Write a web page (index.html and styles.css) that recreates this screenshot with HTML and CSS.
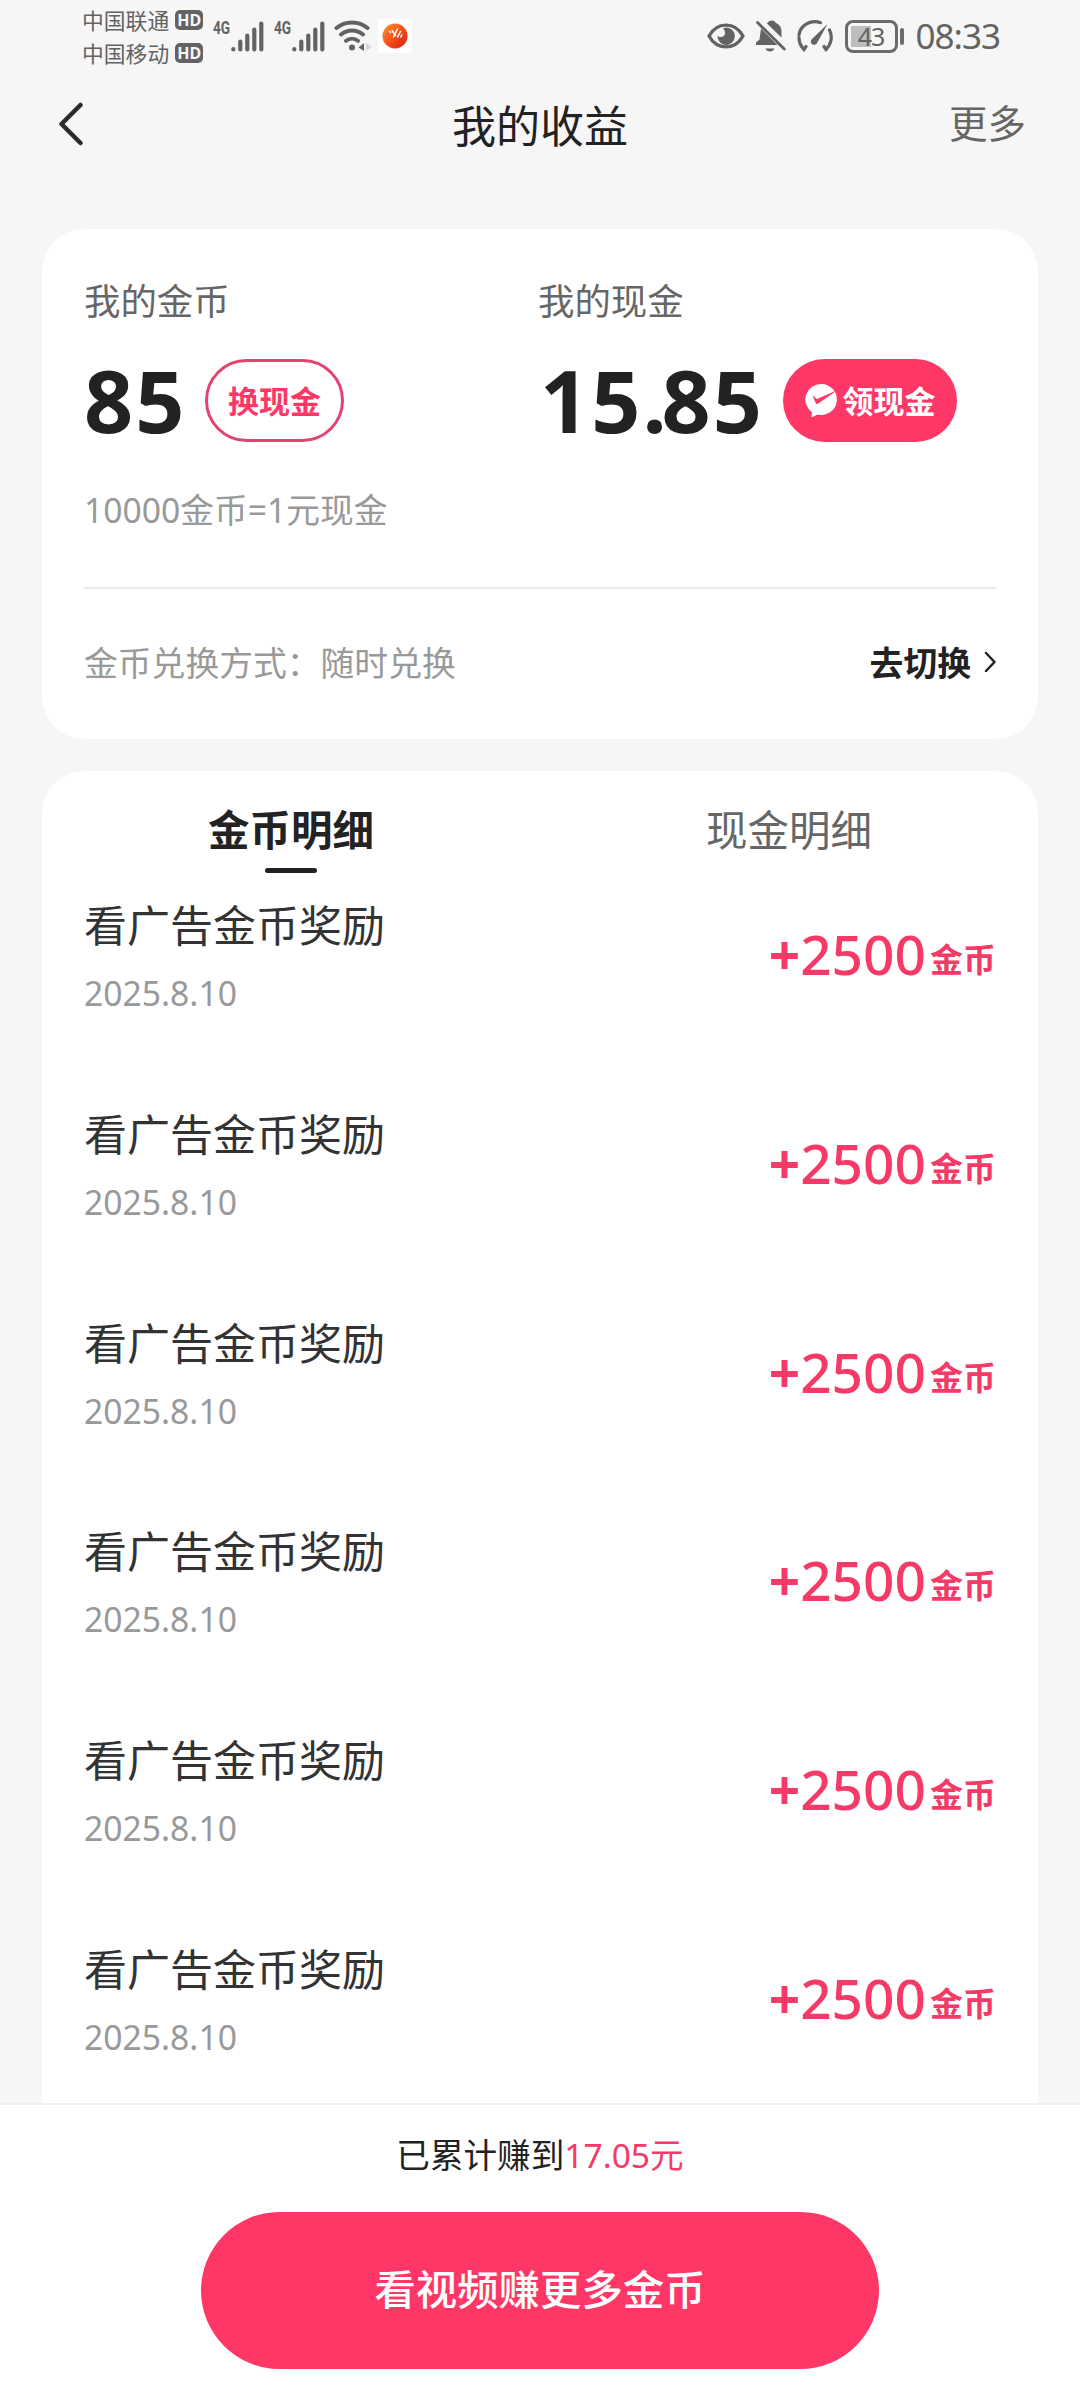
FILE: index.html
```html
<!DOCTYPE html>
<html lang="zh-CN">
<head>
  <meta charset="UTF-8">
  <meta name="viewport" content="width=device-width, initial-scale=1.0">
  <title>我的收益</title>
  <link rel="stylesheet" href="styles.css">
</head>
<body>
  <!-- 状态栏 -->
  <div class="status">
    <div class="carriers">
      <div class="carrier">中国联通<span class="hd">HD</span></div>
      <div class="carrier">中国移动<span class="hd">HD</span></div>
    </div>
    <div class="signal">
      <span class="net">4G</span>
      <svg width="33" height="31" viewBox="0 0 33 31" stroke="#636363" stroke-width="4.2" stroke-linecap="round"><path d="M2.3 28v.5M9.3 20.500v8M16.300 14.500v14M23.300 8.500v20M30.300 2.500v26"/></svg>
    </div>
    <div class="signal">
      <span class="net">4G</span>
      <svg width="33" height="31" viewBox="0 0 33 31" stroke="#636363" stroke-width="4.2" stroke-linecap="round"><path d="M2.3 28v.5M9.3 20.500v8M16.300 14.500v14M23.300 8.500v20M30.300 2.500v26"/></svg>
    </div>
    <svg class="wifi" width="38" height="32" viewBox="0 0 38 32" fill="none" stroke="#636363" stroke-width="4" stroke-linecap="round">
      <path d="M2.500 8C11 .5 25 .5 33.500 8"/>
      <path d="M7 14.500C13.500 9 22.500 9 29 14.500"/>
      <path d="M12 20.800C15.500 18 20.500 18 24 20.800"/>
      <circle cx="18" cy="27.500" r="3" fill="#636363" stroke="none"/>
      <path d="M30 23v8l-5.500-3.500z" fill="#636363" stroke="none"/>
      <path d="M32 23v8l5.500-4z" fill="#d4d4d4" stroke="none"/>
    </svg>
    <div class="app">
      <svg width="34" height="34" viewBox="0 0 34 34">
        <defs><linearGradient id="g" x1="0" y1="0" x2="1" y2="1"><stop offset="0" stop-color="#ff9a2e"/><stop offset=".5" stop-color="#f4501c"/><stop offset="1" stop-color="#d51a16"/></linearGradient></defs>
        <circle cx="17" cy="17" r="12.500" fill="url(#g)"/>
        <path d="M11.500 12.500l1 1M14 11.500l3.500 5M15.500 18l4-8M19.500 18l3-5.500M22.800 18l1-2" stroke="#fff" stroke-width="1.500" stroke-linecap="round"/>
      </svg>
    </div>
    <div class="status-right">
      <svg class="eye" width="38" height="26" viewBox="0 0 38 26">
        <path d="M2 13C10 -1.500 28 -1.500 36 13C28 27.500 10 27.500 2 13z" fill="none" stroke="#636363" stroke-width="3.400" stroke-linejoin="round"/>
        <path d="M19 4.500a8.700 8.700 0 1 1-8.500 8c2.500 3 7.500 1.500 7.500-2.500 0-2-1-3.500-2-4.500z" fill="#636363"/>
      </svg>
      <svg class="bell" width="30" height="32" viewBox="0 0 30 32" fill="#636363">
        <path d="M11 3.500C13 -.3 18 -.5 20 3c4 1.500 5.500 5 5.500 9v5.500z"/>
        <path d="M5 8.500L21.500 25H0v-2.500l3.500-3z"/>
        <path d="M9.500 28.500h9c-1.500 4-7.500 4-9 0z"/>
        <path d="M1.500 2.500L28.300 29" stroke="#636363" stroke-width="2.800" stroke-linecap="round"/>
      </svg>
      <svg class="gauge" width="36" height="32" viewBox="0 0 36 32" fill="none" stroke="#636363" stroke-width="3.200" stroke-linecap="round">
        <path d="M2 15A16 15 0 0 1 23.500 2.700"/>
        <path d="M2 17.500c0 4.500 1.500 8.500 5 12l2-3"/>
        <path d="M32.500 10c3.500 7 1.500 14.500-3.500 19.500l-2-3"/>
        <path d="M30.500 4L15 19a3.300 3.300 0 1 0 5.200 3.700z" fill="#636363" stroke="none"/>
      </svg>
      <div class="battery"><span>43</span></div>
      <span class="nub"></span>
      <span class="clock">08:33</span>
    </div>
  </div>

  <!-- 标题栏 -->
  <div class="nav">
    <svg class="back" width="26" height="44" viewBox="0 0 26 44" fill="none" stroke="#2b2b2b" stroke-width="4.500" stroke-linecap="round" stroke-linejoin="round"><path d="M23.500 3L4.500 22l19 19"/></svg>
    <h1>我的收益</h1>
    <span class="more">更多</span>
  </div>

  <!-- 余额 -->
  <div class="card balance">
    <div class="columns">
      <div class="column">
        <div class="label">我的金币</div>
        <div class="figure"><span class="number">85</span><button class="pill outline">换现金</button></div>
      </div>
      <div class="column">
        <div class="label">我的现金</div>
        <div class="figure">
          <span class="number cash">15<i>.</i>85</span>
          <button class="pill solid">
            <svg width="33" height="34" viewBox="0 0 33 34">
              <path d="M16.500 1a15.500 15.500 0 1 1-4 30.500L6.500 34.500l.5-5.300A15.500 15.500 0 0 1 16.500 1z" fill="#fff"/>
              <path d="M7.500 12.500l4.500 3.500L32.500 7 13 20.800q-1.500.8-2.300-.8z" fill="#ff3766"/>
            </svg>领现金</button>
        </div>
      </div>
    </div>
    <div class="rate">10000金币=1元现金</div>
    <div class="exchange">
      <span>金币兑换方式：随时兑换</span>
      <span class="switch">去切换<svg width="14" height="22" viewBox="0 0 14 22" fill="none" stroke="#222" stroke-width="2.500" stroke-linecap="round" stroke-linejoin="round"><path d="M3 3l8.500 9L3 21"/></svg></span>
    </div>
  </div>

  <!-- 明细 -->
  <div class="card details">
    <div class="tabs">
      <div class="tab active">金币明细</div>
      <div class="tab">现金明细</div>
    </div>
    <div class="list">
      <div class="item">
        <div><div class="name">看广告金币奖励</div><div class="date">2025.8.10</div></div>
        <div class="amount"><b>+</b>2500<small>金币</small></div>
      </div>
      <div class="item">
        <div><div class="name">看广告金币奖励</div><div class="date">2025.8.10</div></div>
        <div class="amount"><b>+</b>2500<small>金币</small></div>
      </div>
      <div class="item">
        <div><div class="name">看广告金币奖励</div><div class="date">2025.8.10</div></div>
        <div class="amount"><b>+</b>2500<small>金币</small></div>
      </div>
      <div class="item">
        <div><div class="name">看广告金币奖励</div><div class="date">2025.8.10</div></div>
        <div class="amount"><b>+</b>2500<small>金币</small></div>
      </div>
      <div class="item">
        <div><div class="name">看广告金币奖励</div><div class="date">2025.8.10</div></div>
        <div class="amount"><b>+</b>2500<small>金币</small></div>
      </div>
      <div class="item">
        <div><div class="name">看广告金币奖励</div><div class="date">2025.8.10</div></div>
        <div class="amount"><b>+</b>2500<small>金币</small></div>
      </div>
    </div>
  </div>

  <!-- 底部按钮 -->
  <div class="footer">
    <div class="total">已累计赚到<span>17.05元</span></div>
    <button class="watch">看视频赚更多金币</button>
  </div>
</body>
</html>
```
FILE: styles.css
```css
* {
  box-sizing: border-box;
}

body {
  margin: 0;
  height: 2400px;
  display: flex;
  flex-direction: column;
  overflow: hidden;
  background-color: #f6f6f6;
  color: #222;
  font-family: 'Noto Sans', 'Noto Sans CJK SC', sans-serif;
}

svg {
  display: block;
  flex: none;
}

button {
  border: none;
  padding: 0;
  font-family: inherit;
  white-space: nowrap;
}

/* 状态栏 */
.status {
  flex: none;
  height: 75px;
  padding: 4px 80px 0 82px;
  display: flex;
  align-items: flex-start;
  color: #636363;
}

.carriers {
  width: 131px;
  margin-top: -1px;
}

.carrier {
  display: flex;
  align-items: center;
  height: 33px;
  font-size: 21.8px;
  font-weight: 400;
}

.hd {
  width: 28px;
  height: 20px;
  margin-left: 6px;
  border-radius: 5px;
  background-color: #636363;
  color: #f6f6f6;
  font-size: 16px;
  font-weight: 700;
  line-height: 20px;
  text-align: center;
}

.signal {
  display: flex;
  width: 61px;
  margin-top: 17px;
}

.net {
  width: 18px;
  font-family: Roboto, sans-serif;
  font-size: 18px;
  font-weight: 700;
  line-height: 14px;
  transform: scaleX(.76);
  transform-origin: left;
}

.wifi {
  margin: 16px 0 0 -1px;
}

.app {
  margin: 15px 0 0 6px;
  background-color: #fff;
}

.status-right {
  display: flex;
  align-items: center;
  height: 40px;
  margin: 12px 0 0 auto;
}

.bell {
  margin-left: 11px;
}

.gauge {
  margin-left: 11px;
}

.battery {
  width: 53px;
  height: 33px;
  margin-left: 12px;
  border: 3px solid #6b6b6b;
  border-radius: 8px;
  padding: 3px;
  background: linear-gradient(#bdbdbd, #bdbdbd) 3px 3px / 20px 21px no-repeat;
  font-size: 25px;
  font-weight: 400;
  line-height: 20px;
  text-align: center;
  letter-spacing: -1px;
}

.nub {
  width: 4px;
  height: 17px;
  margin-left: 2px;
  border-radius: 2px;
  background-color: #6b6b6b;
}

.clock {
  margin-left: 12px;
  font-size: 35px;
  font-weight: 400;
  line-height: 40px;
  letter-spacing: -1px;
}

/* 标题栏 */
.nav {
  flex: none;
  height: 98px;
  margin-bottom: 56px;
  padding: 0 54px 0 57px;
  display: flex;
  justify-content: space-between;
  align-items: center;
}

h1 {
  margin: -1px 0 0 48px;
  font-size: 44px;
  font-weight: 400;
}

.more {
  margin-top: -7px;
  color: #666;
  font-size: 38.500px;
}

/* 卡片 */
.card {
  flex: none;
  margin: 0 42px;
  border-radius: 42px;
  background-color: #fff;
}

.balance {
  height: 510px;
  margin-bottom: 32px;
  padding: 47px 42px 0;
}

.columns {
  display: grid;
  grid-template-columns: 454px 1fr;
}

.label {
  color: #666;
  font-size: 36.400px;
  line-height: 50px;
}

.figure {
  display: flex;
  align-items: center;
  height: 83px;
  margin-top: 33px;
}

.number {
  width: 121px;
  margin-top: -3px;
  font-size: 86px;
  font-weight: 700;
  line-height: 83px;
  letter-spacing: 2px;
}

.number.cash {
  width: 245px;
  padding-left: 2px;
}

.number i {
  font-style: normal;
  letter-spacing: -5px;
}

.pill {
  height: 83px;
  padding-bottom: 2px;
  border-radius: 42px;
  font-size: 31px;
  font-weight: 700;
}

.outline {
  width: 139px;
  border: 3px solid #e0446f;
  background-color: #fff;
  color: #ff3766;
}

.solid {
  display: flex;
  align-items: center;
  justify-content: center;
  gap: 5px;
  width: 174px;
  background-color: #ff3766;
  color: #fff;
}

.rate {
  margin-top: 45px;
  color: #999;
  font-size: 33.700px;
  line-height: 46px;
}

.exchange {
  display: flex;
  justify-content: space-between;
  align-items: center;
  height: 146px;
  margin-top: 54px;
  border-top: 2px solid #ececec;
  color: #999;
  font-size: 33.800px;
}

.switch {
  display: flex;
  align-items: center;
  gap: 12px;
  margin-right: -1px;
  color: #222;
  font-weight: 700;
}

/* 明细 */
.details {
  flex: 1;
  min-height: 0;
  border-radius: 42px 42px 0 0;
  overflow: hidden;
}

.tabs {
  display: grid;
  grid-template-columns: 1fr 1fr;
  height: 125px;
}

.tab {
  display: flex;
  flex-direction: column;
  align-items: center;
  padding-top: 30px;
  color: #666;
  font-size: 41.500px;
  line-height: 58px;
}

.active {
  color: #222;
  font-weight: 700;
}

.active::after {
  content: '';
  width: 52px;
  height: 5px;
  margin-top: 9px;
  border-radius: 3px;
  background-color: #222;
}

.item {
  display: flex;
  justify-content: space-between;
  height: 208.800px;
  padding: 0 42px;
}

.name {
  color: #333;
  font-size: 43px;
  line-height: 60px;
}

.date {
  margin-top: 17px;
  color: #999;
  font-size: 33.700px;
  line-height: 40px;
}

.amount {
  margin-top: 28px;
  color: #f53a67;
  font-size: 55px;
  font-weight: 500;
  line-height: 60px;
}

.amount small {
  margin-left: 4px;
  font-size: 33px;
  font-weight: 700;
  line-height: 1;
  vertical-align: 3px;
}

/* 底部 */
.footer {
  flex: none;
  height: 297px;
  padding-top: 27px;
  border-top: 2px solid #efefef;
  background-color: #fff;
  text-align: center;
}

.total {
  font-size: 33.600px;
  line-height: 46px;
}

.total span {
  color: #f53a67;
}

.watch {
  width: 678px;
  height: 157px;
  margin-top: 34px;
  padding-bottom: 8px;
  border-radius: 79px;
  background-color: #ff3766;
  color: #fff;
  font-size: 41.400px;
  font-weight: 500;
}
```
